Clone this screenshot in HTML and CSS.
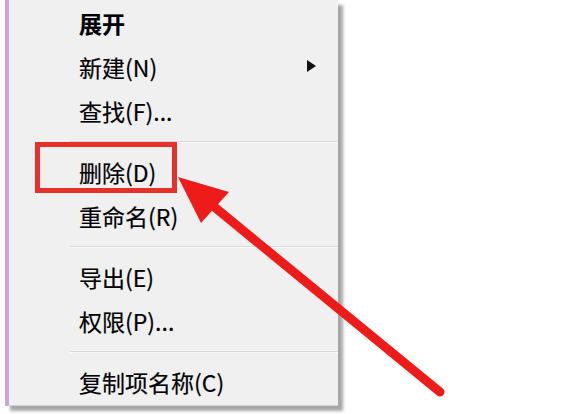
FILE: index.html
```html
<!DOCTYPE html>
<html lang="zh-CN">
<head>
<meta charset="utf-8">
<link rel="stylesheet" href="styles.css">
</head>
<body>
<div class="page">
  <div class="menu">
    <div class="item bold">展开</div>
    <div class="item">新建(N)<span class="sub"></span></div>
    <div class="item">查找(F)...</div>
    <div class="sep"></div>
    <div class="item">删除(D)</div>
    <div class="item">重命名(R)</div>
    <div class="sep"></div>
    <div class="item">导出(E)</div>
    <div class="item">权限(P)...</div>
    <div class="sep"></div>
    <div class="item">复制项名称(C)</div>
  </div>
  <div class="highlight"></div>
  <svg class="arrow" width="578" height="414" viewBox="0 0 578 414">
    <line x1="212" y1="205" x2="440" y2="392" stroke="#ee1b1b" stroke-width="9" stroke-linecap="round"/>
    <polygon points="178,177 229,192 201,223" fill="#ee1b1b"/>
  </svg>
</div>
</body>
</html>
```

FILE: styles.css
```css
html, body {
  margin: 0;
  padding: 0;
  background: #ffffff;
}
.page {
  position: relative;
  width: 578px;
  height: 414px;
  overflow: hidden;
  padding-left: 5px;
  box-sizing: border-box;
  font-family: "Noto Sans CJK SC", "Noto Sans", sans-serif;
}
.menu {
  width: 329px;
  background: #f0f0f0;
  border-left: 4px solid #c9a5dc;
  border-bottom: 1px solid #d0d0d0;
  padding: 1px 0 1px 0;
  box-shadow: 5px 5px 3px rgba(0, 0, 0, 0.35);
}
.item {
  position: relative;
  height: 44px;
  line-height: 44px;
  padding-left: 70px;
  font-size: 23px;
  color: #000;
  white-space: nowrap;
  -webkit-text-stroke: 0.2px #000;
}
.bold {
  font-weight: 700;
}
.sub {
  position: absolute;
  left: 298px;
  top: 15px;
  width: 0;
  height: 0;
  border-top: 6px solid transparent;
  border-bottom: 6px solid transparent;
  border-left: 9px solid #111;
}
.sep {
  height: 17px;
  margin-left: 61px;
  display: flex;
  flex-direction: column;
  justify-content: center;
}
.sep::before {
  content: "";
  display: block;
  height: 1px;
  background: #d9d9d9;
  border-bottom: 1px solid #fafafa;
}
.highlight {
  position: absolute;
  left: 35px;
  top: 142px;
  width: 142px;
  height: 51px;
  box-sizing: border-box;
  border: 5px solid #e4322b;
}
.arrow {
  position: absolute;
  left: 0;
  top: 0;
}
```
